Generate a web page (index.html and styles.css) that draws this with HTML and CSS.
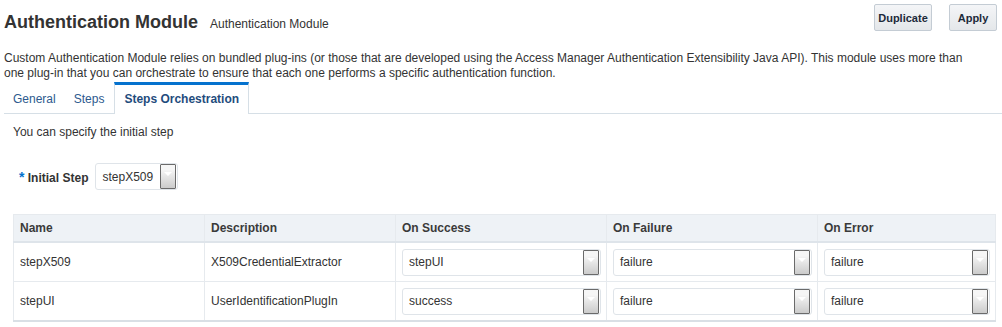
FILE: index.html
```html
<!DOCTYPE html>
<html lang="en">
<head>
  <meta charset="UTF-8">
  <title>Authentication Module</title>
  <link rel="stylesheet" href="styles.css">
</head>
<body>
  <div class="page-header">
    <div class="title-group">
      <h1>Authentication Module</h1>
      <span class="subtitle">Authentication Module</span>
    </div>
    <div class="actions">
      <button class="btn btn-dup">Duplicate</button>
      <button class="btn btn-apply">Apply</button>
    </div>
  </div>

  <p class="desc">Custom Authentication Module relies on bundled plug-ins (or those that are developed using the Access Manager Authentication Extensibility Java API). This module uses more than one plug-in that you can orchestrate to ensure that each one performs a specific authentication function.</p>

  <div class="tabs">
    <a class="tab">General</a>
    <a class="tab">Steps</a>
    <a class="tab active">Steps Orchestration</a>
  </div>

  <div class="tab-body">
    <p class="hint">You can specify the initial step</p>

    <div class="field">
      <label><span class="req">*</span> Initial Step</label>
      <div class="select small">
        <span class="value">stepX509</span>
        <span class="drop"></span>
      </div>
    </div>

    <table class="steps">
      <colgroup>
        <col class="c-name">
        <col class="c-desc">
        <col class="c-sel">
        <col class="c-sel">
        <col class="c-err">
      </colgroup>
      <thead>
        <tr>
          <th>Name</th>
          <th>Description</th>
          <th>On Success</th>
          <th>On Failure</th>
          <th>On Error</th>
        </tr>
      </thead>
      <tbody>
        <tr>
          <td>stepX509</td>
          <td>X509CredentialExtractor</td>
          <td><div class="select"><span class="value">stepUI</span><span class="drop"></span></div></td>
          <td><div class="select"><span class="value">failure</span><span class="drop"></span></div></td>
          <td><div class="select"><span class="value">failure</span><span class="drop"></span></div></td>
        </tr>
        <tr>
          <td>stepUI</td>
          <td>UserIdentificationPlugIn</td>
          <td><div class="select"><span class="value">success</span><span class="drop"></span></div></td>
          <td><div class="select"><span class="value">failure</span><span class="drop"></span></div></td>
          <td><div class="select"><span class="value">failure</span><span class="drop"></span></div></td>
        </tr>
      </tbody>
    </table>
  </div>
</body>
</html>
```

FILE: styles.css
```css
body {
  margin: 0;
  font-family: "Liberation Sans", Arial, sans-serif;
  font-size: 12px;
  color: #333;
  background: #fff;
}
.page-header {
  display: flex;
  justify-content: space-between;
  align-items: flex-start;
  height: 31px;
  padding: 4px 5px 0 4px;
  box-sizing: border-box;
}
.title-group {
  display: flex;
  align-items: baseline;
  padding-top: 8px;
}
h1 {
  margin: 0;
  font-size: 18px;
  line-height: 20px;
  font-weight: bold;
  color: #333;
}
.subtitle {
  margin-left: 12px;
  font-size: 12px;
  color: #333;
}
.actions {
  display: flex;
  gap: 17px;
}
.btn {
  height: 27px;
  padding: 0;
  border: 1px solid #c4ccd4;
  border-radius: 2px;
  background: linear-gradient(#f4f5f7, #e4e7ea);
  font-family: "Liberation Sans", Arial, sans-serif;
  font-size: 11px;
  font-weight: bold;
  color: #1d2a3a;
}
.btn-dup { width: 58px; }
.btn-apply { width: 48px; }
.desc {
  margin: 20px 0 0 4px;
  line-height: 15px;
  padding-right: 20px;
}
.tabs {
  display: flex;
  margin: 1px 0 0 4px;
  border-bottom: 1px solid #d6dfe6;
  height: 31px;
}
.tab {
  display: block;
  padding: 10px 9px 0;
  font-size: 12px;
  color: #2d5a8e;
}
.tab.active {
  margin-left: 1px;
  padding: 7px 9px 0;
  border-top: 3px solid #0572ce;
  border-left: 1px solid #d6dfe6;
  border-right: 1px solid #d6dfe6;
  margin-bottom: -1px;
  background: #fff;
  font-weight: bold;
  color: #1f4c7d;
}
.tab-body {
  padding: 0 0 0 13px;
}
.hint {
  margin: 11px 0 0;
  line-height: 15px;
}
.field {
  display: flex;
  align-items: center;
  margin: 23px 0 0 6px;
}
.field label {
  font-weight: bold;
  color: #333;
  margin-right: 7px;
}
.req {
  color: #0572ce;
  font-size: 14px;
}
.select {
  display: flex;
  align-items: center;
  justify-content: space-between;
  height: 27px;
  padding: 0 1px 0 6px;
  border: 1px solid #dfe4e9;
  border-radius: 3px;
  background: #fff;
  color: #333;
  box-sizing: border-box;
}
.select.small {
  width: 83px;
}
.drop {
  position: relative;
  width: 16px;
  height: 25px;
  border: 1px solid #6a6a6a;
  border-radius: 1px;
  background: linear-gradient(#f6f6f6 20%, #cbcbcb);
  box-sizing: border-box;
}
.drop::after {
  content: "";
  position: absolute;
  left: 3px;
  top: 7px;
  border-left: 4px solid transparent;
  border-right: 4px solid transparent;
  border-top: 4px solid #fff;
}
.steps {
  margin-top: 24px;
  width: 982px;
  table-layout: fixed;
  border-collapse: collapse;
  border: 1px solid #d9dfe5;
  border-bottom: 2px solid #d9dfe5;
}
.c-name, .c-desc { width: 191px; }
.c-sel { width: 211px; }
.c-err { width: 178px; }
.steps th,
.steps td {
  border: 1px solid #e6eaee;
  text-align: left;
}
.steps th {
  height: 26px;
  padding: 0 6px;
  background: #eef2f6;
  border-bottom: 2px solid #dee4ea;
  font-size: 12px;
  font-weight: bold;
  color: #3a3a3a;
}
.steps td {
  height: 38px;
  padding: 0 5px 0 6px;
}
```
